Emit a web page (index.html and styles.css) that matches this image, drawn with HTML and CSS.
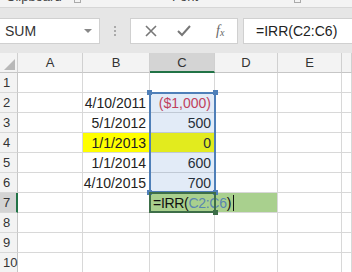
FILE: index.html
```html
<!DOCTYPE html>
<html lang="en">
<head>
<meta charset="UTF-8">
<title>IRR</title>
<link rel="stylesheet" href="styles.css">
</head>
<body>
    <div class="ribbon">
        <span class="group clip">Clipboard</span>
        <span class="launch l1"></span>
        <span class="group font">Font</span>
        <span class="launch l2"></span>
    </div>
    <div class="fbar">
        <div class="namebox">SUM<span class="drop"></span></div>
        <div class="grip"><i></i><i></i><i></i></div>
        <div class="btns">
            <svg width="14" height="14" viewBox="0 0 14 14"><path d="M2 2L12 12M12 2L2 12" stroke="#777" stroke-width="1.6" fill="none"/></svg>
            <svg width="16" height="14" viewBox="0 0 16 14"><path d="M2 7L6 11L14 2" stroke="#777" stroke-width="2" fill="none"/></svg>
            <span class="fx">f<sub>x</sub></span>
        </div>
        <div class="formula">=IRR(C2:C6)</div>
    </div>
    <div class="sheet">
        <div class="hd corner"><span class="tri"></span></div>
        <div class="hd">A</div>
        <div class="hd">B</div>
        <div class="hd sel">C</div>
        <div class="hd">D</div>
        <div class="hd">E</div>
        <div class="hd"></div>

        <div class="rh">1</div><div class="c"></div><div class="c"></div><div class="c"></div><div class="c"></div><div class="c"></div><div class="c"></div>
        <div class="rh">2</div><div class="c"></div><div class="c">4/10/2011</div><div class="c neg">($1,000)</div><div class="c"></div><div class="c"></div><div class="c"></div>
        <div class="rh">3</div><div class="c"></div><div class="c">5/1/2012</div><div class="c">500</div><div class="c"></div><div class="c"></div><div class="c"></div>
        <div class="rh">4</div><div class="c"></div><div class="c yel">1/1/2013</div><div class="c yel">0</div><div class="c"></div><div class="c"></div><div class="c"></div>
        <div class="rh">5</div><div class="c"></div><div class="c">1/1/2014</div><div class="c">600</div><div class="c"></div><div class="c"></div><div class="c"></div>
        <div class="rh">6</div><div class="c"></div><div class="c">4/10/2015</div><div class="c">700</div><div class="c"></div><div class="c"></div><div class="c"></div>
        <div class="rh sel">7</div><div class="c"></div><div class="c"></div><div class="c edit">=IRR(<span class="ref">C2:C6</span>)<span class="caret"></span></div><div class="c green"></div><div class="c"></div><div class="c"></div>
        <div class="rh">8</div><div class="c"></div><div class="c"></div><div class="c"></div><div class="c"></div><div class="c"></div><div class="c"></div>
        <div class="rh">9</div><div class="c"></div><div class="c"></div><div class="c"></div><div class="c"></div><div class="c"></div><div class="c"></div>
        <div class="rh">10</div><div class="c"></div><div class="c"></div><div class="c"></div><div class="c"></div><div class="c"></div><div class="c"></div>

        <!-- range highlight over C2:C6 -->
        <div class="range">
            <span class="h tl"></span><span class="h tr"></span><span class="h bl"></span><span class="h br"></span>
        </div>
        <div class="active"><span class="h br g"></span></div>
    </div>
</body>
</html>
```
FILE: styles.css
```css
body{
    margin: 0;
    width: 352px;
    height: 272px;
    overflow: hidden;
    background: #e6e6e6;
    font-family: "Liberation Sans", Arial, sans-serif;
    color: #222;
}
.ribbon{
    position: relative;
    height: 7px;
    background: #f3f3f3;
    border-bottom: 1px solid #d6d6d6;
    overflow: hidden;
    font-size: 13px;
    color: #444;
}
.group{
    position: absolute;
    top: -11px;
}
.clip{ left: 6px; }
.font{ left: 172px; }
.launch{
    position: absolute;
    top: -4px;
    width: 5px;
    height: 5px;
    border: 1px solid #aaa;
}
.l1{ left: 74px; }
.l2{ left: 294px; }

.fbar{
    display: flex;
    align-items: center;
    height: 45px;
}
.namebox{
    position: relative;
    width: 94px;
    height: 24px;
    line-height: 24px;
    background: #fff;
    border: 1px solid #d0d0d0;
    border-left: none;
    padding-left: 5px;
    font-size: 14px;
    color: #333;
}
.drop{
    position: absolute;
    right: 7px;
    top: 10px;
    border-left: 4px solid transparent;
    border-right: 4px solid transparent;
    border-top: 4px solid #888;
}
.grip{
    width: 30px;
    display: flex;
    flex-direction: column;
    align-items: center;
    gap: 2px;
}
.grip i{
    width: 2px;
    height: 2px;
    background: #aaa;
}
.btns{
    width: 93px;
    height: 24px;
    background: #fff;
    border: 1px solid #d0d0d0;
    display: flex;
    align-items: center;
    gap: 18px;
    padding-left: 13px;
}
.fx{
    font-family: "Liberation Serif", serif;
    font-style: italic;
    font-size: 14px;
    color: #666;
    margin-left: 6px;
}
.fx sub{
    font-size: 10px;
    vertical-align: -1px;
}
.formula{
    flex: 1;
    height: 24px;
    line-height: 24px;
    margin-left: 5px;
    background: #fff;
    border: 1px solid #d0d0d0;
    border-right: none;
    padding-left: 12px;
    font-size: 14px;
}

.sheet{
    position: relative;
    display: grid;
    grid-template-columns: 18px 65px 67px 65px 63px 64px 10px;
    grid-auto-rows: 20px;
    background: #fff;
    font-size: 14px;
}
.sheet > div{
    box-sizing: border-box;
}
.hd{
    background: #f3f3f3;
    border-right: 1px solid #d0d0d0;
    border-bottom: 1px solid #c6c6c6;
    text-align: center;
    line-height: 20px;
    font-size: 13px;
    color: #333;
}
.hd.sel{
    background: #d4d4d4;
    border-bottom: 2px solid #217346;
}
.corner{
    position: relative;
}
.tri{
    position: absolute;
    right: 2px;
    bottom: 2px;
    border-left: 11px solid transparent;
    border-bottom: 11px solid #b8b8b8;
}
.rh{
    background: #f3f3f3;
    border-right: 1px solid #c6c6c6;
    border-bottom: 1px solid #d8d8d8;
    padding-left: 3px;
    line-height: 20px;
    font-size: 13px;
    color: #333;
}
.rh.sel{
    background: #d4d4d4;
    border-right: 2px solid #217346;
}
.c{
    border-right: 1px solid #d8d8d8;
    border-bottom: 1px solid #d8d8d8;
    text-align: right;
    padding-right: 3px;
    line-height: 20px;
    white-space: nowrap;
}
.neg{ color: #d8374a; }
.yel{ background: #ffff00; }
.edit{
    position: relative;
    z-index: 2;
    text-align: left;
    padding-left: 3px;
    background: #a9d08e;
    color: #111;
    letter-spacing: -0.3px;
}
.green{ background: #a9d08e; }
.ref{ color: #5a86b0; }
.caret{
    display: inline-block;
    width: 1px;
    height: 16px;
    background: #111;
    vertical-align: -3px;
    margin-left: 2px;
}

.range{
    position: absolute;
    left: 149px;
    top: 39px;
    width: 67px;
    height: 101px;
    box-sizing: border-box;
    border: 2px solid #4f7fb8;
    background: rgba(60, 120, 200, 0.15);
    z-index: 3;
}
.active{
    position: absolute;
    left: 149px;
    top: 139px;
    width: 67px;
    height: 21px;
    box-sizing: border-box;
    border: 2px solid #3d6e48;
    z-index: 3;
}
.h{
    position: absolute;
    width: 5px;
    height: 5px;
    background: #4f7fb8;
}
.tl{ left: -4px; top: -4px; }
.tr{ right: -4px; top: -4px; }
.bl{ left: -4px; bottom: -4px; }
.br{ right: -4px; bottom: -4px; }
.h.g{ background: #3d6e48; }
```
